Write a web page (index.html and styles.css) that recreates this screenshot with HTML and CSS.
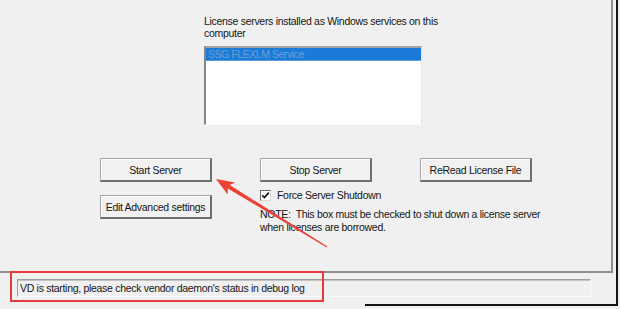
FILE: index.html
```html
<!DOCTYPE html>
<html>
<head>
<meta charset="utf-8">
<link rel="stylesheet" href="styles.css">
</head>
<body>
<div class="window">
  <div class="panel">
    <div class="services">
      <p class="label">License servers installed as Windows services on this<br>computer</p>
      <div class="listbox">
        <div class="item selected">SSG FLEXLM Service</div>
      </div>
    </div>
    <div class="controls">
      <button class="btn">Start Server</button>
      <button class="btn">Stop Server</button>
      <button class="btn">ReRead License File</button>
      <button class="btn btn-edit">Edit Advanced settings</button>
      <div class="options">
        <label class="check"><span class="box"><svg width="9" height="9" viewBox="0 0 9 9"><path d="M1.2 4.2 L3.4 6.6 L7.8 1.6" fill="none" stroke="#111" stroke-width="1.7"/></svg></span>Force Server Shutdown</label>
        <p class="note">NOTE:&nbsp; This box must be checked to shut down a license server<br>when licenses are borrowed.</p>
      </div>
    </div>
  </div>
  <div class="statusbar">
    <div class="status-field">VD is starting, please check vendor daemon's status in debug log</div>
  </div>
</div>
<svg class="annotations" width="620" height="309" viewBox="0 0 620 309">
  <rect x="11" y="272" width="312" height="29" fill="none" stroke="#e63b3e" stroke-width="2"/>
  <polygon points="216,179 235.1,182.4 229.8,185.1 327.3,246.6 326.7,247.4 227.8,188.5 227.7,194.4" fill="#ee4136"/>
</svg>
</body>
</html>
```

FILE: styles.css
```css
html, body {
  margin: 0;
  padding: 0;
  background: #f0f0f0;
  overflow: hidden;
}

body {
  width: 620px;
  height: 309px;
  position: relative;
  font-family: "Liberation Sans", Arial, sans-serif;
  font-size: 10.5px;
  letter-spacing: -0.3px;
  color: #151515;
}

.window {
  position: relative;
  width: 616px;
  height: 306px;
  border-right: 2px solid #141414;
  background: #f0f0f0;
}

.window::after {
  content: "";
  position: absolute;
  left: 365px;
  top: 304px;
  width: 253px;
  height: 2px;
  background: #141414;
}

.panel {
  display: flow-root;
  width: 611px;
  height: 271px;
  border-right: 2px solid #8e8e8e;
  border-bottom: 2px solid #8e8e8e;
  background: #f0f0f0;
}

.services {
  margin-left: 204px;
  padding-top: 15px;
}

.label {
  margin: 0;
  line-height: 12px;
}

.listbox {
  margin-top: 7px;
  width: 218px;
  height: 79px;
  box-sizing: border-box;
  background: #fff;
  border-top: 2px solid #a4a4a4;
  border-left: 2px solid #858585;
  border-right: 1px solid #e6e6e6;
  border-bottom: 1px solid #fafafa;
}

.item {
  height: 12px;
  line-height: 12px;
  padding-left: 2px;
  font-size: 10.5px;
  letter-spacing: -0.45px;
}

.selected {
  background: #1a7bd8;
  color: #6b9fd4;
  border-bottom: 1px solid #5b9be0;
}

.controls {
  display: grid;
  grid-template-columns: 112px 112px 112px;
  column-gap: 48px;
  row-gap: 7px;
  margin: 33px 0 0 100px;
}

.btn {
  height: 24px;
  padding: 0;
  font: inherit;
  letter-spacing: inherit;
  color: inherit;
  background: #f1f1f1;
  border-top: 1px solid #a8a8a8;
  border-left: 1px solid #a8a8a8;
  border-right: 2px solid #6e6e6e;
  border-bottom: 2px solid #6e6e6e;
  box-shadow: inset 1px 1px #fdfdfd;
}

.btn-edit {
  grid-column: 1;
  margin-top: 6px;
  align-self: start;
}

.options {
  grid-column: 2 / 4;
  white-space: nowrap;
}

.check {
  display: flex;
  align-items: center;
  height: 13px;
  line-height: 13px;
}

.box {
  display: flex;
  align-items: center;
  justify-content: center;
  width: 11px;
  height: 11px;
  box-sizing: border-box;
  margin-right: 6px;
  background: #fff;
  border-top: 1px solid #6a6a6a;
  border-left: 1px solid #6a6a6a;
  border-right: 1px solid #d8d8d8;
  border-bottom: 1px solid #d8d8d8;
}

.note {
  margin: 6px 0 0;
  line-height: 13px;
}

.statusbar {
  padding: 6px 0 0 17px;
}

.status-field {
  width: 574px;
  height: 18px;
  box-sizing: border-box;
  padding-left: 2px;
  line-height: 16px;
  border-top: 1px solid #9c9c9c;
  border-left: 1px solid #9c9c9c;
  border-right: 1px solid #fbfbfb;
  border-bottom: 1px solid #fbfbfb;
  box-shadow: inset 0 1px #c4c4c4;
  white-space: nowrap;
}

.annotations {
  position: absolute;
  left: 0;
  top: 0;
  pointer-events: none;
}
```
